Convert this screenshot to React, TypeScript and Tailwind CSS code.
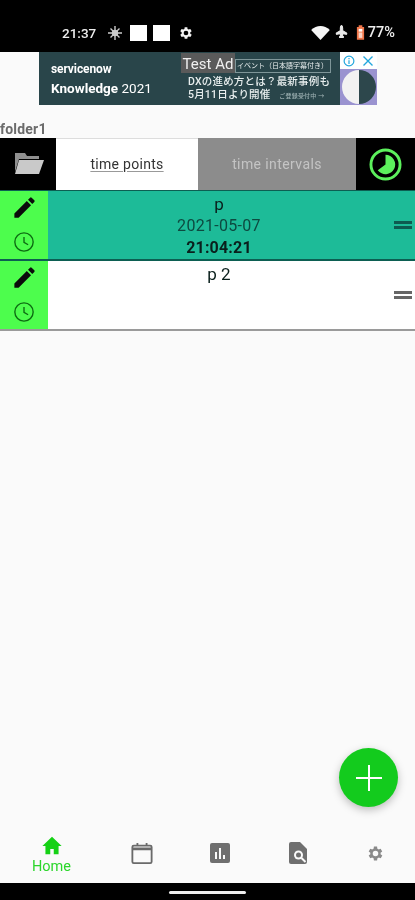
import React from 'react';
import { Plane } from 'lucide-react';

const font = { fontFamily: 'Roboto, "Noto Sans CJK JP", sans-serif' };

function Pencil() {
  return (
    <svg viewBox="0 0 24 24" className="w-[27px] h-[27px]" fill="#0b0b0b">
      <path d="M3 17.25V21h3.75L17.81 9.94l-3.75-3.75L3 17.25zM20.71 7.04a1 1 0 0 0 0-1.41l-2.34-2.34a1 1 0 0 0-1.41 0l-1.83 1.83 3.75 3.75 1.83-1.83z" />
    </svg>
  );
}

function Clock() {
  return (
    <svg viewBox="0 0 24 24" className="w-[22px] h-[22px]" fill="none" stroke="#0d6b12" strokeWidth="1.5">
      <circle cx="12" cy="12" r="10" />
      <path d="M12 6.5V12.5L16.5 15" />
    </svg>
  );
}

function Row({ selected, name, date, time }: { selected?: boolean; name: string; date?: string; time?: string }) {
  const bar = selected ? 'bg-[#0d5b50]' : 'bg-[#666]';
  return (
    <div className={`flex h-[70px] border-b-2 ${selected ? 'border-[#0c5f52] bg-[#1dbb98]' : 'border-[#9a9a9a] bg-white'}`}>
      <div className="w-[48px] bg-[#4dfd4d] flex flex-col items-center justify-between pt-[3px] pb-[6px]">
        <Pencil />
        <Clock />
      </div>
      <div className="flex-1 flex flex-col items-center text-[#0a1f1c]">
        <div className="text-[17px] leading-[20px] mt-[3px]">{name}</div>
        {date && <div className="text-[16px] leading-[20px] tracking-[0.3px] text-[#0d4a40] mt-[2px]">{date}</div>}
        {time && <div className="text-[16px] leading-[20px] font-bold tracking-[0.2px] mt-[2px]">{time}</div>}
      </div>
      <div className="w-[25px] flex flex-col gap-[2px] pt-[30px] pl-[4px]">
        <div className={`w-[18px] h-[3px] ${bar}`} />
        <div className={`w-[18px] h-[3px] ${bar}`} />
      </div>
    </div>
  );
}

function NavItem({ children, label, className }: { children: React.ReactNode; label?: string; className?: string }) {
  return (
    <div className={`flex flex-col items-center justify-center w-[51px] ${className ?? ''}`}>
      {children}
      {label && <div className="text-[14.5px] leading-[16px] text-[#2bd62b] mt-[3px]">{label}</div>}
    </div>
  );
}

export default function App() {
  return (
    <div className="w-[415px] h-[900px] flex flex-col bg-[#fafafa] relative overflow-hidden blur-[0.5px]" style={font}>
      {/* status bar */}
      <div className="h-[52px] bg-black flex items-end pb-[9px] pl-[62px] pr-[20px] text-[#eeeeee] shrink-0">
        <span className="text-[13.5px] leading-[20px] font-medium w-[34px]">21:37</span>
        <svg viewBox="0 0 16 16" className="w-[16px] h-[16px] ml-[11px] mb-[2px]" fill="none" stroke="#ccc" strokeWidth="1.4">
          <path d="M8 1v14M1 8h14M3.5 3.5l9 9M12.5 3.5l-9 9" />
          <circle cx="8" cy="8" r="2.5" fill="#ccc" />
        </svg>
        <div className="w-[17px] h-[16px] bg-white ml-[7px] mb-[2px]" />
        <div className="w-[17px] h-[16px] bg-white ml-[6px] mb-[2px]" />
        <svg viewBox="0 0 24 24" className="w-[16px] h-[16px] ml-[8px] mb-[2px]" fill="#f2f2f2">
          <path d="M20.400 13a7.500 7.500 0 0 0 0-2l2.100-1.600-2-3.500-2.500 1a7.500 7.500 0 0 0-1.700-1L16 3.300h-4l-.4 2.600a7.500 7.500 0 0 0-1.700 1l-2.500-1-2 3.500L7.500 11a7.500 7.500 0 0 0 0 2l-2.100 1.600 2 3.500 2.500-1a7.500 7.500 0 0 0 1.700 1l.4 2.600h4l.4-2.600a7.500 7.500 0 0 0 1.700-1l2.500 1 2-3.500zM14 15.500a3.500 3.500 0 1 1 0-7 3.500 3.500 0 0 1 0 7z" transform="translate(-2 0)" />
        </svg>
        <div className="flex-1" />
        <svg viewBox="0 0 24 18" className="w-[19px] h-[14px] mb-[3px] mr-[5px]" fill="#f5f5f5">
          <path d="M12 18 0 5c7-6.500 17-6.500 24 0z" />
        </svg>
        <Plane className="w-[13px] h-[13px] mb-[4px] mr-[8px] rotate-[-45deg]" fill="#e8e8e8" stroke="#e8e8e8" />
        <svg viewBox="0 0 10 16" className="w-[9px] h-[15px] mb-[3px] mr-[3px]">
          <path d="M3 0h4v2h2v14H1V2h2z" fill="#f0764a" />
          <rect x="3" y="4" width="4" height="3" fill="#fff" />
          <rect x="3" y="8" width="4" height="6" fill="#fbd3c3" />
        </svg>
        <span className="text-[14.5px] leading-[20px] font-medium">77%</span>
      </div>

      {/* ad */}
      <div className="h-[53px] shrink-0 flex justify-center pl-[1px]">
        <div className="w-[338px] flex bg-[#29454a] relative">
          <div className="w-[130px] pl-[12px] pt-[10px] text-white">
            <div className="text-[12px] leading-[14px] font-bold tracking-[-0.1px]">servicenow</div>
            <div className="text-[13.5px] leading-[16px] font-bold mt-[4px] whitespace-nowrap">Knowledge <span className="font-normal">2021</span></div>
          </div>
          <div className="w-[171px] relative text-[#e8eeee]">
            <div className="absolute left-[66px] top-[7px] h-[14px] w-[96px] border border-[#7f9699] text-[7px] leading-[12px] pl-[1px] whitespace-nowrap overflow-hidden">イベント（日本語字幕付き）</div>
            <div className="absolute left-[19px] top-[24px] text-[10.5px] leading-[12px] font-medium whitespace-nowrap tracking-[0.2px]">DXの進め方とは？最新事例も</div>
            <div className="absolute left-[19px] top-[37px] text-[10.5px] leading-[12px] font-medium whitespace-nowrap tracking-[0.2px]">5月11日より開催 <span className="text-[6px] text-[#9db0b2] ml-[6px]">ご登録受付中 →</span></div>
          </div>
          <div className="w-[37px] bg-[#9a93d0] flex flex-col">
            <div className="h-[17px] bg-white flex items-center justify-around text-[#22a7dd]">
              <svg viewBox="0 0 16 16" className="w-[12px] h-[12px]" fill="none" stroke="currentColor" strokeWidth="1.6">
                <circle cx="8" cy="8" r="6.5" />
                <path d="M8 7v5M8 4v1.800" />
              </svg>
              <svg viewBox="0 0 16 16" className="w-[12px] h-[12px]" fill="none" stroke="currentColor" strokeWidth="1.8">
                <path d="M2 2l12 12M14 2 2 14" />
              </svg>
            </div>
            <div className="flex-1 flex items-center justify-center">
              <svg viewBox="0 0 34 34" className="w-[34px] h-[34px]">
                <path d="M17 0a17 17 0 0 0 0 34z" fill="#f2f2f2" />
                <path d="M17 0a17 17 0 0 1 0 34z" fill="#2d474c" />
              </svg>
            </div>
          </div>
          <div className="absolute left-[142px] top-[1px] h-[20px] w-[54px] text-center bg-[#5a5a5a] text-[#f0f0f0] text-[15px] leading-[22px] whitespace-nowrap">Test Ad</div>
        </div>
      </div>

      <div className="h-[33px] shrink-0 flex items-end pb-[1px] text-[14px] leading-[16px] font-bold text-[#6b6b6b] tracking-[0.2px]">folder1</div>

      {/* tabs */}
      <div className="h-[53px] shrink-0 flex border-b border-[#0c5f52]">
        <div className="w-[56px] bg-black flex items-center justify-center">
          <svg viewBox="0 0 32 24" className="w-[32px] h-[24px]">
            <path d="M3 1h10l2 3h12v3H7L3 20z" fill="#8f8f8f" />
            <path d="M7 8h25l-5 14H3z" fill="#c9c9c9" />
          </svg>
        </div>
        <div className="flex-1 bg-white border-t border-[#dddddd] flex items-center justify-center">
          <span className="text-[14px] text-[#333] underline underline-offset-[2px] decoration-[#999] tracking-[0.3px]">time points</span>
        </div>
        <div className="w-[158px] bg-[#8c8c8c] flex items-center justify-center">
          <span className="text-[14px] text-[#c4c4c4] tracking-[0.4px]">time intervals</span>
        </div>
        <div className="w-[59px] bg-black flex items-center justify-center">
          <svg viewBox="0 0 34 34" className="w-[33px] h-[33px]">
            <circle cx="17" cy="17" r="15" fill="none" stroke="#5cf05c" strokeWidth="3" />
            <path d="M17 7a10 10 0 1 1-8 16L17 17z" fill="#5cf05c" />
          </svg>
        </div>
      </div>

      <Row selected name="p" date="2021-05-07" time="21:04:21" />
      <Row name="p 2" />

      <div className="flex-1" />

      {/* bottom nav */}
      <div className="h-[53px] shrink-0 flex items-center gap-[27px] pl-[26px] pb-[7px]">
        <NavItem label="Home" className="mr-[12px] mt-[4px]">
          <svg viewBox="0 0 24 24" className="w-[22px] h-[21px]" fill="#15d115">
            <path d="M12 2 1 12.500h3.500V22h5.500v-6h4v6h5.500v-9.500H23z" />
          </svg>
        </NavItem>
        <NavItem>
          <svg viewBox="0 0 24 24" className="w-[22px] h-[24px]" fill="none" stroke="#6a6a6a" strokeWidth="2">
            <rect x="1.500" y="4" width="21" height="19" rx="1.500" />
            <path d="M1.500 7.500h21" strokeWidth="3" />
            <path d="M7 1v3M17 1v3" />
          </svg>
        </NavItem>
        <NavItem>
          <svg viewBox="0 0 20 20" className="w-[20px] h-[20px]">
            <rect width="20" height="20" rx="2" fill="#6f6f6f" />
            <path d="M5 9h2v7H5zM9 5h2v11H9zM13 12h2v4h-2z" fill="#fafafa" />
          </svg>
        </NavItem>
        <NavItem>
          <svg viewBox="0 0 18 22" className="w-[18px] h-[22px]">
            <path d="M2 0h9l7 7v13a2 2 0 0 1-2 2H2a2 2 0 0 1-2-2V2a2 2 0 0 1 2-2z" fill="#6f6f6f" />
            <circle cx="9.500" cy="13" r="4.500" fill="#fafafa" />
            <circle cx="9.500" cy="13" r="2.500" fill="#6f6f6f" />
            <path d="M12.500 16l4 4" stroke="#fafafa" strokeWidth="2" />
          </svg>
        </NavItem>
        <NavItem>
          <svg viewBox="0 0 24 24" className="w-[19px] h-[19px]" fill="#8a8a8a">
            <path fillRule="evenodd" d="M20.400 13a7.500 7.500 0 0 0 0-2l2.100-1.600-2-3.500-2.500 1a7.500 7.500 0 0 0-1.700-1L16 3.300h-4l-.4 2.600a7.500 7.500 0 0 0-1.700 1l-2.500-1-2 3.500L7.500 11a7.500 7.500 0 0 0 0 2l-2.100 1.600 2 3.500 2.500-1a7.500 7.500 0 0 0 1.700 1l.4 2.600h4l.4-2.600a7.500 7.500 0 0 0 1.700-1l2.500 1 2-3.500zM14 15.500a3.500 3.500 0 1 1 0-7 3.500 3.500 0 0 1 0 7z" transform="translate(-2 0)" />
          </svg>
        </NavItem>
      </div>

      {/* gesture bar */}
      <div className="h-[17px] shrink-0 bg-black flex justify-center pt-[8px]">
        <div className="w-[77px] h-[3px] rounded-full bg-[#eeeeee]" />
      </div>

      {/* fab */}
      <div className="absolute left-[339px] top-[748px] w-[59px] h-[59px] rounded-full bg-[#13cb1d] shadow-[0_3px_8px_rgba(0,0,0,0.25)] flex items-center justify-center">
        <svg viewBox="0 0 26 26" className="w-[26px] h-[26px]" stroke="#fff" strokeWidth="2">
          <path d="M13 0v26M0 13h26" />
        </svg>
      </div>
    </div>
  );
}
